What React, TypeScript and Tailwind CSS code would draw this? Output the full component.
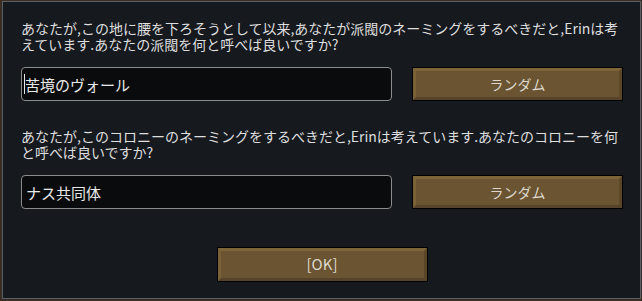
const jp = "font-['Noto_Sans_CJK_JP','Noto_Sans',sans-serif]";

function BevelButton({ label, className, textSize }: { label: string; className: string; textSize: string }) {
	return (
		<div className={`border border-black bg-[#6b5431] ${className}`}>
			<div
				className={`flex h-full items-center justify-center border-[3px] border-t-[#7d6439] border-l-[#7a6136] border-r-[#5b4727] border-b-[#57432a] ${textSize} text-[#ddd8cc] ${jp}`}
			>
				{label}
			</div>
		</div>
	);
}

function NameField({ value, caret }: { value: string; caret?: boolean }) {
	return (
		<div className="flex h-[34px] w-[371px] items-center rounded-[4px] border border-[#8c8c8c] bg-[#0a0b0d] pl-[2px]">
			{caret && <span className="h-[20px] w-px bg-[#e6e6e6]" />}
			<span className={`text-[15px] leading-none text-[#e8e8e8] ${caret ? "" : "pl-[2px]"} ${jp}`}>{value}</span>
		</div>
	);
}

function NameRow({ question, value, caret }: { question: string; value: string; caret?: boolean }) {
	return (
		<div className="flex w-[602px] flex-col">
			<p className={`text-[14px] leading-[16px] text-[#dedede] ${jp}`}>{question}</p>
			<div className="mt-[15px] flex gap-[20px]">
				<NameField value={value} caret={caret} />
				<BevelButton label="ランダム" className="h-[34px] w-[211px]" textSize="text-[14px]" />
			</div>
		</div>
	);
}

export default function App() {
	return (
		<div className="h-[301px] w-[642px] overflow-hidden bg-[#3d2c20]">
			<div className="ml-[2px] mt-[1px] flex h-[298px] w-[639px] flex-col border border-[#56606a] bg-[#16191e] pl-[18px] pt-[18px]">
				<NameRow
					question="あなたが,この地に腰を下ろそうとして以来,あなたが派閥のネーミングをするべきだと,Erinは考えています.あなたの派閥を何と呼べば良いですか?"
					value="苦境のヴォール"
					caret
				/>
				<div className="mt-[27px]">
					<NameRow
						question="あなたが,このコロニーのネーミングをするべきだと,Erinは考えています.あなたのコロニーを何と呼べば良いですか?"
						value="ナス共同体"
					/>
				</div>
				<div className="mt-[38px] flex w-[602px] justify-center">
					<BevelButton label="[OK]" className="h-[35px] w-[211px]" textSize="text-[15px]" />
				</div>
			</div>
		</div>
	);
}
